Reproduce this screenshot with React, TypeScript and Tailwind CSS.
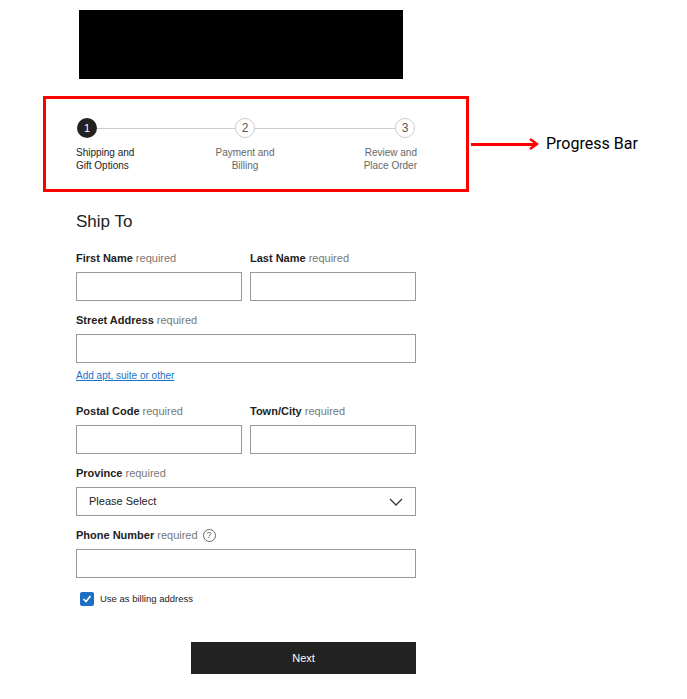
import React from "react";

const Label = ({ b, q }: { b: string; q?: boolean }) => (
  <div className="flex items-center text-[11px] leading-[14px] text-[#222] h-[14px]">
    <span className="font-bold">{b}</span>
    <span className="text-[#777] ml-[3px]">required</span>
    {q && (
      <span className="ml-[5px] w-[13px] h-[13px] rounded-full border border-[#666] text-[9px] leading-[11px] text-[#666] flex items-center justify-center">?</span>
    )}
  </div>
);
const Input = ({ w }: { w: string }) => <div className={`${w} h-[29px] border border-[#999] bg-white`} />;

export default function App() {
  return (
    <div className="w-[687px] h-[699px] bg-white relative" style={{ fontFamily: "'Liberation Sans', Arial, sans-serif" }}>
      <div className="pt-[10px] pl-[79px]">
        <div className="w-[324px] h-[69px] bg-black" />
      </div>
      <div className="flex items-center mt-[17px] ml-[43px]">
        <div className="w-[426px] h-[96px] border-[3px] border-[#f00] relative">
          <div className="absolute top-[29px] h-px bg-[#ccc]" style={{ left: 44, width: 315 }} />
          <div className="absolute left-[31px] top-[19px] w-[20px] h-[20px] rounded-full bg-[#222] text-white text-[11px] flex items-center justify-center">1</div>
          <div className="absolute left-[189px] top-[19px] w-[20px] h-[20px] rounded-full bg-white border border-[#ccc] text-[#555] text-[12px] flex items-center justify-center">2</div>
          <div className="absolute left-[349px] top-[19px] w-[20px] h-[20px] rounded-full bg-white border border-[#ccc] text-[#555] text-[12px] flex items-center justify-center">3</div>
          <div className="absolute left-[30px] top-[47px] text-[10px] leading-[13px] text-[#222]">Shipping and<br />Gift Options</div>
          <div className="absolute left-[159px] w-[80px] top-[47px] text-center text-[10px] leading-[13px] text-[#666]">Payment and<br />Billing</div>
          <div className="absolute right-[49px] top-[47px] text-right text-[10px] leading-[13px] text-[#666]">Review and<br />Place Order</div>
        </div>
        <div className="flex items-center ml-[2px]">
          <div className="w-[66px] h-[3px] bg-[#f00]" />
          <svg width="10" height="12" viewBox="0 0 10 12" className="-ml-[8px]"><path d="M1 1 L8 6 L1 11" stroke="#f00" strokeWidth="2.5" fill="none" /></svg>
          <span className="ml-[7px] text-[16px] text-black" style={{ fontFamily: "Roboto, sans-serif" }}>Progress Bar</span>
        </div>
      </div>
      <div className="ml-[76px] w-[340px]">
        <div className="mt-[20px] text-[17px] leading-[20px] text-[#222]">Ship To</div>
        <div className="mt-[19px] flex gap-[8px]">
          <div><Label b="First Name" /><div className="mt-[7px]"><Input w="w-[166px]" /></div></div>
          <div><Label b="Last Name" /><div className="mt-[7px]"><Input w="w-[166px]" /></div></div>
        </div>
        <div className="mt-[12px]"><Label b="Street Address" /><div className="mt-[7px]"><Input w="w-[340px]" /></div></div>
        <div className="mt-[7px] text-[10px] leading-[12px] text-[#1a73c8] underline">Add apt, suite or other</div>
        <div className="mt-[22px] flex gap-[8px]">
          <div><Label b="Postal Code" /><div className="mt-[7px]"><Input w="w-[166px]" /></div></div>
          <div><Label b="Town/City" /><div className="mt-[7px]"><Input w="w-[166px]" /></div></div>
        </div>
        <div className="mt-[12px]"><Label b="Province" />
          <div className="mt-[7px] h-[29px] border border-[#999] flex items-center justify-between px-[12px] text-[11px] text-[#222]">
            <span>Please Select</span>
            <svg width="14" height="8" viewBox="0 0 14 8"><path d="M1 1 L7 7 L13 1" stroke="#333" strokeWidth="1.3" fill="none" /></svg>
          </div>
        </div>
        <div className="mt-[12px]"><Label b="Phone Number" q /><div className="mt-[7px]"><Input w="w-[340px]" /></div></div>
        <div className="mt-[14px] ml-[4px] flex items-center">
          <div className="w-[14px] h-[14px] bg-[#1f6fc5] rounded-[2px] flex items-center justify-center">
            <svg width="10" height="10" viewBox="0 0 10 10"><path d="M1.5 5 L4 7.5 L8.5 2" stroke="white" strokeWidth="1.6" fill="none" /></svg>
          </div>
          <span className="ml-[6px] text-[9.5px] text-[#222]">Use as billing address</span>
        </div>
        <div className="mt-[36px] ml-[115px] w-[225px] h-[32px] bg-[#222] text-white text-[11px] flex items-center justify-center">Next</div>
      </div>
    </div>
  );
}
